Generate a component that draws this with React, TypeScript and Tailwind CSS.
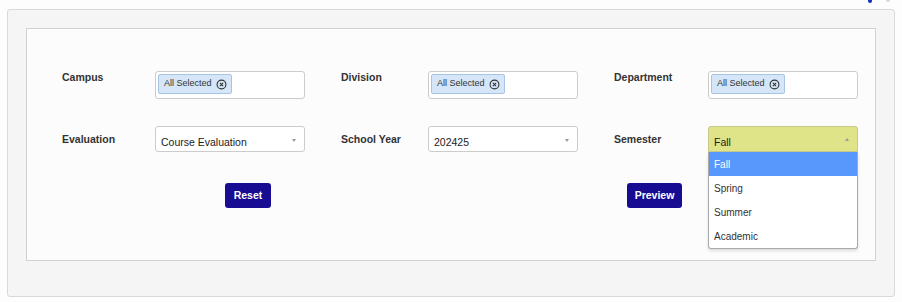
import React from 'react';

function ClearIcon() {
    return (
        <svg width="11" height="11" viewBox="0 0 11 11" className="ml-[4px] mt-[1px]">
            <circle cx="5.5" cy="5.5" r="4.4" fill="none" stroke="#333" strokeWidth="1.1" />
            <path d="M3.9 3.9 L7.1 7.1 M7.1 3.9 L3.9 7.1" stroke="#333" strokeWidth="1.1" />
        </svg>
    );
}

function MultiBox() {
    return (
        <div className="flex items-start w-[150px] h-[28px] border border-[#cccccc] rounded-[3px] bg-white p-[2px]">
            <div className="flex items-center h-[20px] pl-[5px] pr-[4px] bg-[#d5e6f8] border border-[#a9c3e3] rounded-[2px] text-[9px] leading-[10px] text-[#333]">
                <span className="-mt-[2px]">All Selected</span>
                <ClearIcon />
            </div>
        </div>
    );
}

function Select({ value }: { value: string }) {
    return (
        <div className="relative w-[150px] h-[26px] border border-[#cccccc] rounded-[3px] bg-white pl-[5px] pt-[9px] text-[10.5px] leading-[12px] text-[#222]">
            {value}
            <span className="absolute right-[8px] top-[12px] w-0 h-0 border-l-[2.5px] border-r-[2.5px] border-t-[3px] border-l-transparent border-r-transparent border-t-[#999]" />
        </div>
    );
}

function SemesterSelect() {
    const items = ['Fall', 'Spring', 'Summer', 'Academic'];
    return (
        <div className="relative w-[150px]">
            <div className="relative h-[26px] border border-[#c7c98a] rounded-t-[3px] bg-[#dee487] pl-[5px] pt-[9px] text-[10.5px] leading-[12px] text-[#222]">
                Fall
                <span className="absolute right-[8px] top-[11px] w-0 h-0 border-l-[2.5px] border-r-[2.5px] border-b-[3px] border-l-transparent border-r-transparent border-b-[#999]" />
            </div>
            <div className="absolute left-0 top-[26px] w-[150px] bg-white border border-[#aaaaaa] border-t-0 rounded-b-[3px] shadow-[0_2px_3px_rgba(0,0,0,0.12)]">
                {items.map((it, i) => (
                    <div
                        key={it}
                        className={i === 0
                            ? 'h-[24px] flex items-center pl-[5px] text-[10px] bg-[#5897fb] text-white'
                            : 'h-[24px] flex items-center pl-[5px] text-[10px] text-[#333]'}
                    >
                        {it}
                    </div>
                ))}
            </div>
        </div>
    );
}

export default function App() {
    return (
        <div className="w-[902px] h-[302px] bg-[#fdfdfd] font-['Liberation_Sans',Arial,sans-serif]">
            {/* cut-off toolbar icons */}
            <div className="h-[9px] relative">
                <div className="absolute left-[868px] top-0 w-[4px] h-[3px] rounded-b-full bg-[#1a2fb5]" />
                <div className="absolute left-[886px] top-0 w-[4px] h-[2px] rounded-b-full bg-[#d4d4d4]" />
            </div>

            <div className="mx-[7px] h-[288px] border border-[#d9d9d9] rounded-[3px] bg-[#f5f5f5] pt-[18px] px-[18px]">
                <div className="h-[233px] border border-[#d2d2d2] bg-[#fcfcfc] pt-[42px] pl-[35px]">
                    {/* row 1 */}
                    <div className="flex items-start">
                        <div className="w-[93px] text-[10.5px] leading-[12px] font-bold text-[#333]">Campus</div>
                        <MultiBox />
                        <div className="w-[87px] ml-[36px] text-[10.5px] leading-[12px] font-bold text-[#333]">Division</div>
                        <MultiBox />
                        <div className="w-[94px] ml-[36px] text-[10.5px] leading-[12px] font-bold text-[#333]">Department</div>
                        <MultiBox />
                    </div>

                    {/* row 2 */}
                    <div className="flex items-start mt-[27px]">
                        <div className="w-[93px] mt-[7px] text-[10.5px] leading-[12px] font-bold text-[#333]">Evaluation</div>
                        <Select value="Course Evaluation" />
                        <div className="w-[87px] ml-[36px] mt-[7px] text-[10.5px] leading-[12px] font-bold text-[#333]">School Year</div>
                        <Select value="202425" />
                        <div className="w-[94px] ml-[36px] mt-[7px] text-[10.5px] leading-[12px] font-bold text-[#333]">Semester</div>
                        <SemesterSelect />
                    </div>

                    {/* buttons */}
                    <div className="flex mt-[31px]">
                        <button className="ml-[163px] w-[46px] h-[25px] rounded-[3px] bg-[#170c92] text-white text-[10.5px] font-bold">Reset</button>
                        <button className="ml-[356px] w-[55px] h-[25px] rounded-[3px] bg-[#170c92] text-white text-[10.5px] font-bold">Preview</button>
                    </div>
                </div>
            </div>
        </div>
    );
}
